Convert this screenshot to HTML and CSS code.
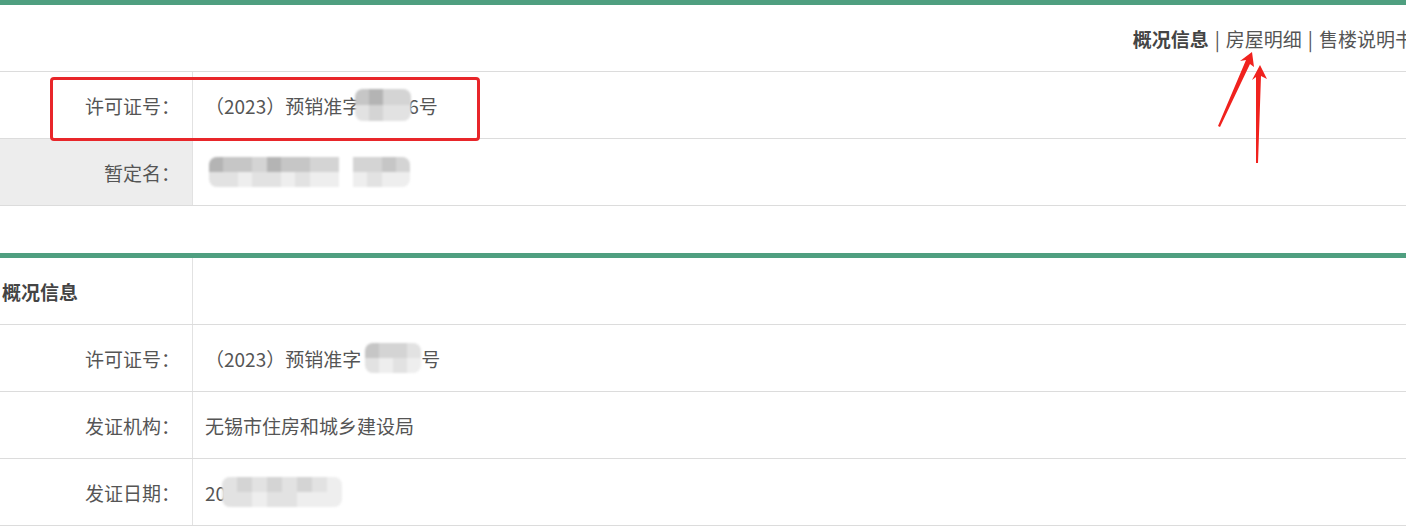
FILE: index.html
```html
<!DOCTYPE html>
<html lang="zh-CN">
<head>
    <meta charset="UTF-8">
    <meta name="viewport" content="width=device-width, initial-scale=1.0">
    <title>预售许可证</title>
    <link rel="stylesheet" href="styles.css">
</head>
<body>
    <div class="page">
        <div class="panel">
            <div class="nav">
                <span class="nav-item active">概况信息</span>
                <span class="sep">|</span>
                <span class="nav-item">房屋明细</span>
                <span class="sep">|</span>
                <span class="nav-item">售楼说明书</span>
            </div>
            <div class="row">
                <div class="label">许可证号：</div>
                <div class="value">（2023）预销准字<span class="mosaic m-short">
                    <i class="c2"></i><i class="c1"></i><i class="c3"></i><i class="c3"></i>
                    <i class="c4"></i><i class="c3"></i><i class="c4"></i><i class="c4"></i>
                </span>6号</div>
            </div>
            <div class="row">
                <div class="label shaded">暂定名：</div>
                <div class="value"><span class="mosaic m-name">
                    <i class="c1"></i><i class="c2"></i><i class="c2"></i><i class="c3"></i><i class="c1"></i><i class="c2"></i><i class="c2"></i><i class="c3"></i><i class="c3"></i><i class="c0"></i><i class="c3"></i><i class="c3"></i><i class="c2"></i><i class="c3"></i>
                    <i class="c4"></i><i class="c4"></i><i class="c5"></i><i class="c4"></i><i class="c4"></i><i class="c5"></i><i class="c4"></i><i class="c5"></i><i class="c5"></i><i class="c0"></i><i class="c5"></i><i class="c4"></i><i class="c5"></i><i class="c5"></i>
                </span></div>
            </div>
        </div>

        <div class="panel second">
            <div class="row">
                <div class="label title">概况信息</div>
                <div class="value"></div>
            </div>
            <div class="row">
                <div class="label">许可证号：</div>
                <div class="value">（2023）预销准字<span class="mosaic m-short2">
                    <i class="c2"></i><i class="c3"></i><i class="c3"></i><i class="c4"></i>
                    <i class="c4"></i><i class="c5"></i><i class="c4"></i><i class="c5"></i>
                </span>号</div>
            </div>
            <div class="row">
                <div class="label">发证机构：</div>
                <div class="value">无锡市住房和城乡建设局</div>
            </div>
            <div class="row">
                <div class="label">发证日期：</div>
                <div class="value">20<span class="mosaic m-date">
                    <i class="c4"></i><i class="c3"></i><i class="c4"></i><i class="c3"></i><i class="c4"></i><i class="c3"></i><i class="c4"></i><i class="c5"></i>
                    <i class="c4"></i><i class="c4"></i><i class="c5"></i><i class="c4"></i><i class="c4"></i><i class="c5"></i><i class="c5"></i><i class="c5"></i>
                </span></div>
            </div>
        </div>

        <div class="callout"></div>
        <svg class="arrows" width="1406" height="527" viewBox="0 0 1406 527">
            <polygon points="1252,52 1254,67 1250,64 1220,127 1218,126 1246,60 1240,61" fill="#f0221e"/>
            <polygon points="1260,65 1267,79 1261,76 1258,163 1256,163 1256,77 1252,80" fill="#f0221e"/>
        </svg>
    </div>
</body>
</html>
```

FILE: styles.css
```css
html, body {
    margin: 0;
    overflow: hidden;
    background: #fff;
}
.page {
    position: relative;
    width: 1414px;
    font-family: "Noto Sans CJK SC", "Noto Sans", sans-serif;
    font-size: 19px;
    color: #555;
}
.panel {
    border-top: 5px solid #4f9f80;
}
.panel.second {
    margin-top: 47px;
}
.nav {
    display: flex;
    justify-content: flex-end;
    align-items: center;
    height: 66px;
    border-bottom: 1px solid #dcdcdc;
}
.nav-item.active {
    font-weight: bold;
    color: #444;
}
.sep {
    margin: 0 6px;
    color: #555;
}
.row {
    display: grid;
    grid-template-columns: 193px 1fr;
    height: 66px;
    border-bottom: 1px solid #dcdcdc;
}
.label {
    display: flex;
    align-items: center;
    justify-content: flex-end;
    padding-right: 12px;
    border-right: 1px solid #e2e2e2;
}
.label.shaded {
    background: #ededed;
}
.label.title {
    justify-content: flex-start;
    padding-left: 2px;
    font-weight: bold;
    color: #444;
}
.value {
    display: flex;
    align-items: center;
    padding-left: 12px;
    white-space: nowrap;
}
.mosaic {
    display: inline-grid;
    filter: blur(1.2px);
    border-radius: 8px;
    overflow: hidden;
}
.mosaic i {
    display: block;
}
.c0 { background: #fff; }
.c1 { background: #b4b4b4; }
.c2 { background: #c6c6c6; }
.c3 { background: #d4d4d4; }
.c4 { background: #e2e2e2; }
.c5 { background: #eeeeee; }
.m-short {
    grid-template-columns: repeat(4, 14px);
    grid-auto-rows: 16px;
    margin: 0 -3px 0 -6px;
}
.m-short2 {
    grid-template-columns: repeat(4, 14px);
    grid-auto-rows: 15px;
    margin: 0 0 0 4px;
}
.m-name {
    grid-template-columns: repeat(14, 14.4px);
    grid-auto-rows: 15px;
    margin-left: 4px;
}
.m-date {
    grid-template-columns: repeat(8, 15px);
    grid-auto-rows: 15px;
    margin-left: -4px;
}
.callout {
    position: absolute;
    left: 50px;
    top: 77px;
    width: 424px;
    height: 58px;
    border: 3px solid #e8262a;
    border-radius: 4px;
}
.arrows {
    position: absolute;
    left: 0;
    top: 0;
}
```
